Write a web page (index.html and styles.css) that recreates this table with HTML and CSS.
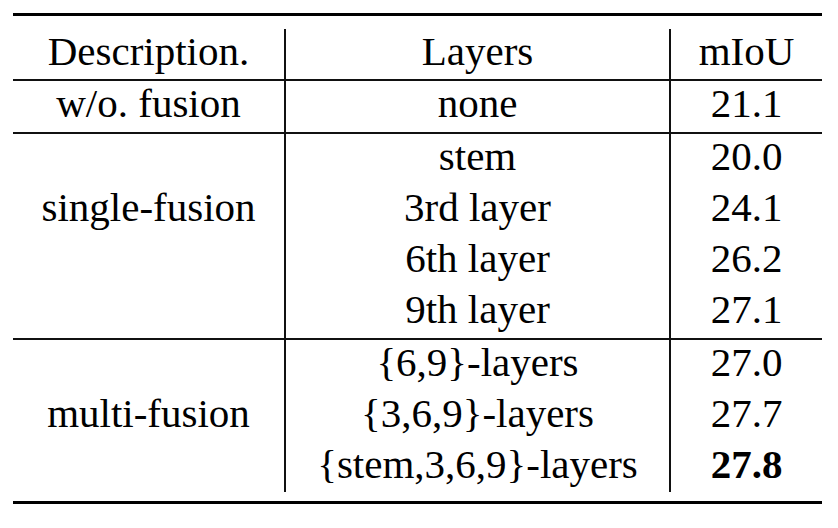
FILE: index.html
```html
<!DOCTYPE html>
<html lang="en">
<head>
  <meta charset="UTF-8" />
  <title>Fusion ablation</title>
  <link rel="stylesheet" href="styles.css">
</head>
<body>

  <div class="table-wrap">
    <table class="results">
      <colgroup>
        <col class="col-desc">
        <col class="col-layers">
        <col class="col-miou">
      </colgroup>
      <thead>
        <tr>
          <th>Description.</th>
          <th class="sep">Layers</th>
          <th class="sep">mIoU</th>
        </tr>
      </thead>
      <tbody>
        <tr class="group-end">
          <td>w/o. fusion</td>
          <td class="sep">none</td>
          <td class="sep">21.1</td>
        </tr>
      </tbody>
      <tbody>
        <tr>
          <td></td>
          <td class="sep">stem</td>
          <td class="sep">20.0</td>
        </tr>
        <tr>
          <td>single-fusion</td>
          <td class="sep">3rd layer</td>
          <td class="sep">24.1</td>
        </tr>
        <tr>
          <td></td>
          <td class="sep">6th layer</td>
          <td class="sep">26.2</td>
        </tr>
        <tr class="group-end">
          <td></td>
          <td class="sep">9th layer</td>
          <td class="sep">27.1</td>
        </tr>
      </tbody>
      <tbody>
        <tr>
          <td></td>
          <td class="sep">{6,9}-layers</td>
          <td class="sep">27.0</td>
        </tr>
        <tr>
          <td>multi-fusion</td>
          <td class="sep">{3,6,9}-layers</td>
          <td class="sep">27.7</td>
        </tr>
        <tr class="last">
          <td></td>
          <td class="sep">{stem,3,6,9}-layers</td>
          <td class="sep best">27.8</td>
        </tr>
      </tbody>
    </table>
  </div>

</body>
</html>
```

FILE: styles.css
```css
body {
  margin: 0;
  background: #fff;
  font-family: "Liberation Serif", "Times New Roman", serif;
  color: #000;
}

.table-wrap {
  width: 809px;
  margin: 13px 0 0 13px;
  padding: 13px 0 9px;
  border-top: 3px solid #000;
  border-bottom: 3px solid #000;
}

.results {
  width: 809px;
  table-layout: fixed;
  border-collapse: separate;
  border-spacing: 0;
  font-size: 41px;
}

.col-desc { width: 271px; }
.col-layers { width: 385px; }
.col-miou { width: 153px; }

.results th,
.results td {
  padding: 0 0 7px;
  line-height: 44px;
  text-align: center;
  font-weight: normal;
  white-space: nowrap;
}

.results th {
  padding-bottom: 6px;
  border-bottom: 2px solid #111;
}

.results .sep {
  border-left: 2px solid #111;
}

.results .group-end td {
  border-bottom: 2px solid #111;
}

.results .last td {
  padding-bottom: 6px;
}

.results .best {
  font-weight: bold;
}
```
